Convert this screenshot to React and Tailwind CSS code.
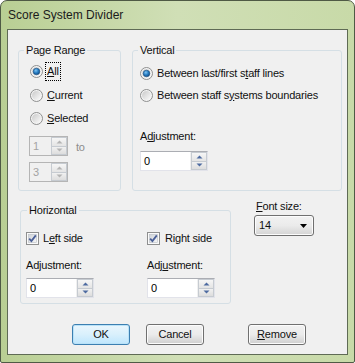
import React, { useId } from 'react';

const font = { fontFamily: '"Liberation Sans", Arial, sans-serif' };

function Radio({ checked }) {
  const id = useId();
  return (
    <svg width="13" height="13" viewBox="0 0 13 13" className="shrink-0">
      <defs>
        <linearGradient id={id + 'a'} x1="0" y1="0" x2="1" y2="1">
          <stop offset="0" stopColor="#c9c9c9" />
          <stop offset="1" stopColor="#fbfbfb" />
        </linearGradient>
        <radialGradient id={id + 'b'} cx="0.4" cy="0.35" r="0.7">
          <stop offset="0" stopColor="#7fc4f2" />
          <stop offset="0.5" stopColor="#2a7fc4" />
          <stop offset="1" stopColor="#0c4a86" />
        </radialGradient>
      </defs>
      <circle cx="6.5" cy="6.5" r="6" fill="#f4f4f4" stroke="#8e8f8f" />
      <circle cx="6.5" cy="6.5" r="4.5" fill={`url(#${id}a)`} />
      {checked && <circle cx="6.5" cy="6.5" r="3.3" fill={`url(#${id}b)`} stroke="#1d4e7c" strokeWidth="0.6" />}
    </svg>
  );
}

function Check() {
  const id = useId();
  return (
    <svg width="13" height="13" viewBox="0 0 13 13" className="shrink-0">
      <defs>
        <linearGradient id={id} x1="0" y1="0" x2="1" y2="1">
          <stop offset="0" stopColor="#cfd3d8" />
          <stop offset="1" stopColor="#f7f7f7" />
        </linearGradient>
      </defs>
      <rect x="0.5" y="0.5" width="12" height="12" fill="#fafafa" stroke="#8e8f8f" />
      <rect x="2.5" y="2.5" width="8" height="8" fill={`url(#${id})`} stroke="#b8bdc3" strokeWidth="0.6" />
      <path d="M3.2 6.6 L5.4 9 L9.8 3.4" fill="none" stroke="#4a5f97" strokeWidth="1.8" />
    </svg>
  );
}

function Arrow({ up, color }) {
  return (
    <svg width="7" height="4" viewBox="0 0 7 4">
      <path d={up ? 'M0.5 3.5 L3.5 0.5 L6.5 3.5 Z' : 'M0.5 0.5 L3.5 3.5 L6.5 0.5 Z'} fill={color} />
    </svg>
  );
}

function Spin({ value, width, disabled }) {
  const arrow = disabled ? '#b4b4b4' : '#4d6aa0';
  return (
    <div
      className={`flex h-[20px] border ${
        disabled ? 'border-[#b5b5b5] bg-[#f0f0f0] text-[#a3a3a3]' : 'border-[#e2e3ea] border-t-[#abadb3] bg-white text-black'
      }`}
      style={{ width }}
    >
      <div className="flex flex-1 items-center pl-[3px] text-[11px] leading-none">{value}</div>
      <div className="flex w-[17px] flex-col border-l border-[#f0f0f0]">
        <div className="flex flex-1 items-center justify-center border border-[#c6cbd1] bg-gradient-to-b from-[#f6f6f6] to-[#e4e4e4]">
          <Arrow up color={arrow} />
        </div>
        <div className="flex flex-1 items-center justify-center border border-t-0 border-[#c6cbd1] bg-gradient-to-b from-[#f1f1f1] to-[#dddddd]">
          <Arrow color={arrow} />
        </div>
      </div>
    </div>
  );
}

function Button({ children, primary }) {
  return (
    <div
      className={`flex h-[21px] w-[58px] items-center justify-center rounded-[3px] border text-[11px] ${
        primary
          ? 'border-[#3c7fb1] bg-gradient-to-b from-[#eaf6fd] via-[#d9f0fc] to-[#bee6fd] shadow-[inset_0_0_0_1px_#b9e2f8]'
          : 'border-[#707070] bg-gradient-to-b from-[#f2f2f2] via-[#ebebeb] to-[#cfcfcf] shadow-[inset_0_0_0_1px_#fcfcfc]'
      }`}
    >
      {children}
    </div>
  );
}

function Group({ label, className, children, legendClass = 'ml-[5px]' }) {
  return (
    <fieldset className={`rounded-[3px] border border-[#d5dfe5] p-0 ${className}`}>
      <legend className={`px-[2px] text-[11px] leading-[13px] ${legendClass}`}>{label}</legend>
      {children}
    </fieldset>
  );
}

export default function App() {
  return (
    <div
      className="flex h-[363px] w-[355px] flex-col rounded-t-[7px] rounded-b-[2px] border border-[#4f5a45] bg-gradient-to-r from-[#b9cf94] via-[#d0dfb6] to-[#c8daa8] px-[6px] pb-[7px] text-black"
      style={font}
    >
      <div className="flex h-[28px] items-center pl-[1px] pb-[1px] text-[12px] text-[#1b1b1b]">Score System Divider</div>
      <div className="flex flex-1 flex-col border border-[#5f6b55] bg-[#f0f0f0] text-[11px] tracking-[-0.2px] text-[#111]">
        <div className="mt-[14px] flex">
          <Group label="Page Range" className="ml-[10px] h-[147px] w-[103px]">
            <div className="mt-[3px] flex flex-col pl-[11px]">
              <div className="flex h-[23px] items-center gap-[3px]">
                <Radio checked />
                <span className="outline-1 outline-dotted outline-black px-[1px]"><u>A</u>ll</span>
              </div>
              <div className="flex h-[24px] items-center gap-[4px]">
                <Radio />
                <span><u>C</u>urrent</span>
              </div>
              <div className="flex h-[23px] items-center gap-[4px]">
                <Radio />
                <span><u>S</u>elected</span>
              </div>
            </div>
            <div className="mt-[6px] flex flex-col gap-[6px] pl-[10px]">
              <div className="flex items-center">
                <Spin value="1" width={39} disabled />
                <span className="ml-[8px] mt-[3px] text-[#8d8d8d]">to</span>
              </div>
              <Spin value="3" width={39} disabled />
            </div>
          </Group>
          <Group label="Vertical" className="ml-[11px] h-[147px] w-[210px]">
            <div className="mt-[5px] flex flex-col pl-[7px]">
              <div className="flex h-[22px] items-center gap-[4px]">
                <Radio checked />
                <span>Between last/first s<u>t</u>aff lines</span>
              </div>
              <div className="flex h-[22px] items-center gap-[4px]">
                <Radio />
                <span>Between staff s<u>y</u>stems boundaries</span>
              </div>
              <div className="mt-[24px] leading-[13px]">A<u>d</u>justment:</div>
              <div className="mt-[8px]">
                <Spin value="0" width={68} />
              </div>
            </div>
          </Group>
        </div>
        <div className="flex items-start">
          <Group label="Horizontal" legendClass="ml-[6px]" className="ml-[12px] mt-[13px] h-[100px] w-[211px]">
            <div className="mt-[10px] flex pl-[5px]">
              <div className="flex w-[121px] flex-col">
                <div className="flex h-[22px] items-center gap-[4px]">
                  <Check />
                  <span>L<u>e</u>ft side</span>
                </div>
                <div className="mt-[10px] leading-[13px]">Adjustment:</div>
                <div className="mt-[6px]">
                  <Spin value="0" width={68} />
                </div>
              </div>
              <div className="flex flex-col">
                <div className="flex h-[22px] items-center gap-[5px]">
                  <Check />
                  <span>Ri<u>g</u>ht side</span>
                </div>
                <div className="mt-[10px] leading-[13px]">Adj<u>u</u>stment:</div>
                <div className="mt-[6px]">
                  <Spin value="0" width={68} />
                </div>
              </div>
            </div>
          </Group>
          <div className="ml-[23px] mt-[9px] flex flex-col">
            <div className="ml-[2px] leading-[13px]"><u>F</u>ont size:</div>
            <div className="mt-[2px] flex h-[21px] w-[60px] items-center justify-between rounded-[3px] border border-[#707070] bg-gradient-to-b from-[#f2f2f2] via-[#ebebeb] to-[#d4d4d4] pl-[4px] pr-[6px] shadow-[inset_0_0_0_1px_#fcfcfc]">
              <span>14</span>
              <svg width="7" height="4" viewBox="0 0 7 4">
                <path d="M0 0 L7 0 L3.5 4 Z" fill="#000" />
              </svg>
            </div>
          </div>
        </div>
        <div className="mt-[20px] flex">
          <div className="ml-[64px]"><Button primary>OK</Button></div>
          <div className="ml-[16px]"><Button>Cancel</Button></div>
          <div className="ml-[44px]"><Button><span><u>R</u>emove</span></Button></div>
        </div>
      </div>
    </div>
  );
}
